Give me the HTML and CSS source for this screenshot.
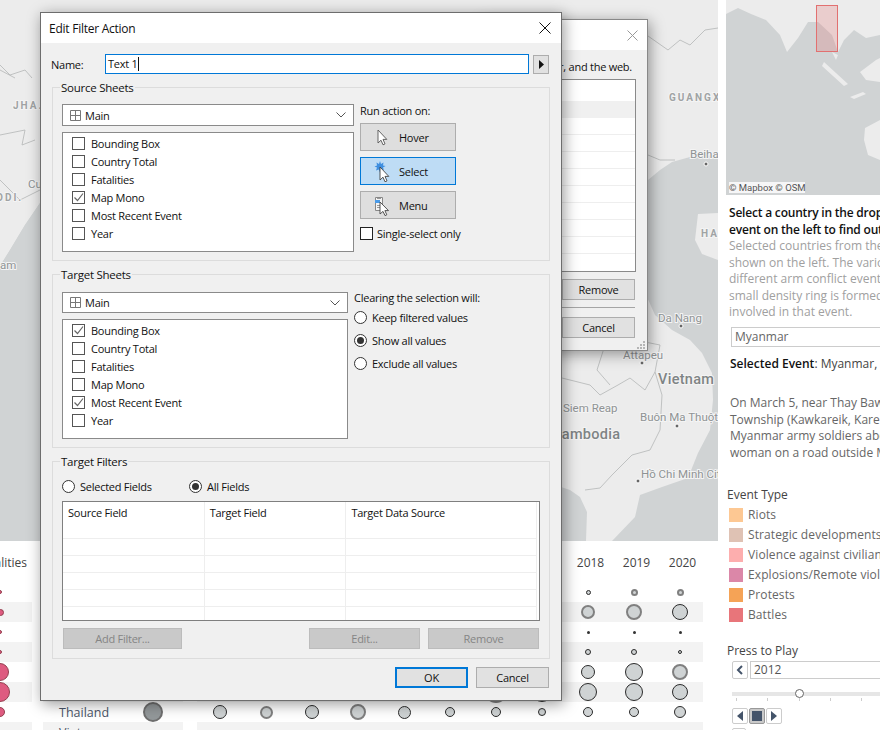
FILE: index.html
```html
<!DOCTYPE html>
<html lang="en">
<head>
<meta charset="utf-8">
<title>Edit Filter Action</title>
<link rel="stylesheet" href="styles.css">
</head>
<body>
<div class="page">
  <div class="dash">
    <svg class="map" viewBox="0 0 718 541" width="718" height="541" aria-hidden="true">
      <rect width="718" height="541" fill="#d0d3d4"/>
      <path fill="#ececec" d="M0 0H718V155L690 157 672 162 660 170 648 180 640 200 640 260 647 297 655 315 672 330 690 340 702 353 712 373 713 400 710 430 698 453 688 478 662 487 640 495 635 517 612 541 586 541 587 512 580 497 570 490 561 487 500 480 100 480 60 200 40 203 25 225 10 250 0 266Z"/>
      <path fill="#ececec" d="M698 214 718 213V260L702 254 695 240Z"/>
      <path fill="#d0d3d4" d="M0 266 10 250 25 225 40 203V541H0Z"/>
      <g fill="none" stroke="#b4b6b6" stroke-width=".8">
        <path d="M648 36 668 50 680 40 690 45 705 30 718 28"/>
        <path d="M648 155 660 160 675 160"/>
        <path d="M562 378 590 385 600 395 618 385 630 378 645 390 655 372 662 395 660 430 650 450 632 455 612 475 600 488 585 490"/>
        <path d="M605 345 597 370 610 385M635 340 660 345 655 372"/>
        <path d="M0 70 15 78M0 135 25 130 22 145 35 140M0 65 10 75 25 70 32 78M0 180 20 200 40 190"/>
      </g>
      <text class="lbl sp" x="13" y="109">JHA.</text>
      <text class="lbl" x="28" y="188">Cu</text>
      <text class="lbl sp" x="-4" y="201">ODI.</text>
      <text class="lbl" x="0" y="269">am</text>
      <text class="lbl sp" x="669" y="101">GUANGX</text>
      <text class="lbl" x="690" y="158">Beiha</text>
      <circle class="dot" cx="706" cy="164" r="2"/>
      <text class="lbl sp" x="701" y="237">HA</text>
      <text class="lbl" x="658" y="322">Da Nang</text>
      <circle class="dot" cx="681" cy="326" r="2"/>
      <text class="lbl" x="623" y="359">Attapeu</text>
      <circle class="dot" cx="642" cy="363" r="2"/>
      <text class="lbl big" x="658" y="384">Vietnam</text>
      <text class="lbl" x="563" y="412">Siem Reap</text>
      <text class="lbl" x="640" y="421">Buôn Ma Thuột</text>
      <circle class="dot" cx="677" cy="426" r="2"/>
      <text class="lbl big" x="552" y="439">Cambodia</text>
      <text class="lbl" x="641" y="478">Hồ Chi Minh City</text>
      <circle class="dot" cx="638" cy="481" r="2"/>
    </svg>
    <div class="bubble-table">
      <div class="row head">
        <div class="c1 title-cell">Fatalities</div>
        <div class="c2"></div>
        <div class="c3 years">
          <span>2010</span><span>2011</span><span>2012</span><span>2013</span><span>2014</span><span>2015</span><span>2016</span><span>2017</span><span>2018</span><span>2019</span><span>2020</span>
        </div>
      </div>
      <div class="row">
        <div class="c1"><span class="cell"><i class="b red" style="width:4px;height:4px"></i></span></div>
        <div class="c2"></div>
        <div class="c3"><span class="cell skip8"><i class="b dk" style="width:5px;height:5px"></i></span><span class="cell"><i class="b gr" style="width:7px;height:7px"></i></span><span class="cell"><i class="b gr" style="width:7px;height:7px"></i></span></div>
      </div>
      <div class="row alt">
        <div class="c1"><span class="cell"><i class="b red" style="width:7px;height:7px"></i></span></div>
        <div class="c2"></div>
        <div class="c3"><span class="cell skip8"><i class="b gr" style="width:14px;height:14px"></i></span><span class="cell"><i class="b gr" style="width:16px;height:16px"></i></span><span class="cell"><i class="b dk" style="width:16px;height:16px"></i></span></div>
      </div>
      <div class="row">
        <div class="c1"><span class="cell"><i class="b red" style="width:4px;height:4px"></i></span></div>
        <div class="c2"></div>
        <div class="c3"><span class="cell skip8"><i class="b pt" style="width:3px;height:3px"></i></span><span class="cell"><i class="b pt" style="width:3px;height:3px"></i></span><span class="cell"><i class="b pt" style="width:3px;height:3px"></i></span></div>
      </div>
      <div class="row alt">
        <div class="c1"><span class="cell"><i class="b red" style="width:4px;height:4px"></i></span></div>
        <div class="c2"></div>
        <div class="c3"><span class="cell skip8"><i class="b dk" style="width:6px;height:6px"></i></span><span class="cell"><i class="b dk" style="width:6px;height:6px"></i></span><span class="cell"><i class="b dk" style="width:4px;height:4px"></i></span></div>
      </div>
      <div class="row">
        <div class="c1"><span class="cell"><i class="b red" style="width:18px;height:18px"></i></span></div>
        <div class="c2"></div>
        <div class="c3"><span class="cell skip8"><i class="b dk" style="width:14px;height:14px"></i></span><span class="cell"><i class="b dk" style="width:18px;height:18px"></i></span><span class="cell"><i class="b gr" style="width:16px;height:16px"></i></span></div>
      </div>
      <div class="row alt">
        <div class="c1"><span class="cell"><i class="b red" style="width:20px;height:20px"></i></span></div>
        <div class="c2"><span class="name"></span><span class="cell big"><i class="b gr" style="width:18px;height:18px"></i></span></div>
        <div class="c3"><span class="cell skip6"><i class="b gr" style="width:22px;height:22px"></i></span><span class="cell"><i class="b dk" style="width:20px;height:20px"></i></span><span class="cell"><i class="b dk" style="width:18px;height:18px"></i></span><span class="cell"><i class="b dk" style="width:18px;height:18px"></i></span><span class="cell"><i class="b dk" style="width:16px;height:16px"></i></span></div>
      </div>
      <div class="row">
        <div class="c1"><span class="cell"><i class="b red" style="width:10px;height:10px"></i></span></div>
        <div class="c2"><span class="name">Thailand</span><span class="cell big"><i class="b gr fill" style="width:20px;height:20px"></i></span></div>
        <div class="c3"><span class="cell"><i class="b dk" style="width:14px;height:14px"></i></span><span class="cell"><i class="b gr" style="width:13px;height:13px"></i></span><span class="cell"><i class="b dk" style="width:14px;height:14px"></i></span><span class="cell"><i class="b gr" style="width:16px;height:16px"></i></span><span class="cell"><i class="b dk" style="width:13px;height:13px"></i></span><span class="cell"><i class="b dk" style="width:10px;height:10px"></i></span><span class="cell"><i class="b dk" style="width:10px;height:10px"></i></span><span class="cell"><i class="b dk" style="width:8px;height:8px"></i></span><span class="cell"><i class="b dk" style="width:10px;height:10px"></i></span><span class="cell"><i class="b dk" style="width:10px;height:10px"></i></span><span class="cell"><i class="b dk" style="width:12px;height:12px"></i></span></div>
      </div>
      <div class="row alt">
        <div class="c1"></div>
        <div class="c2"><span class="name">Vietnam</span><span class="cell big"><i class="b dk" style="width:4px;height:4px"></i></span></div>
        <div class="c3"></div>
      </div>
    </div>
  </div>

  <aside class="side">
    <svg class="mini" viewBox="0 0 154 195" width="154" height="195" aria-hidden="true">
      <rect width="154" height="195" fill="#d0d3d4"/>
      <path fill="#ececec" d="M0 0H154V35L140 38 128 30 118 40 112 52 106 35 92 22 82 22 72 38 61 52 54 35 40 20 25 14 12 8 0 14Z"/>
      <path fill="#ececec" d="M98 62 122 84 118 86 96 66ZM124 97 137 92 140 94 128 99ZM134 72 150 60 154 58V82L140 80ZM139 128 154 120V160L142 155 138 140ZM106 52 110 60 112 55Z"/>
      <rect class="bbox" x="90.500" y="5.500" width="21" height="46"/>
    </svg>
    <div class="attrib">© Mapbox © OSM</div>
    <div class="intro">
      <p class="strong">Select a country in the dropdown and an</p>
      <p class="strong">event on the left to find out more.</p>
      <p class="muted">Selected countries from the dropdown are</p>
      <p class="muted">shown on the left. The various circles show</p>
      <p class="muted">different arm conflict events in that year. A</p>
      <p class="muted">small density ring is formed by the actors</p>
      <p class="muted">involved in that event.</p>
    </div>
    <div class="drop">Myanmar</div>
    <p class="selected"><b>Selected Event</b>: Myanmar, March 5</p>
    <div class="story">
      <p>On March 5, near Thay Baw Boe village in</p>
      <p>Township (Kawkareik, Karen state), two</p>
      <p>Myanmar army soldiers abducted a young</p>
      <p>woman on a road outside Myawaddy.</p>
    </div>
    <p class="sec first">Event Type</p>
    <ul class="legend-list">
      <li><i class="sw riots"></i>Riots</li>
      <li><i class="sw strat"></i>Strategic developments</li>
      <li><i class="sw viol"></i>Violence against civilians</li>
      <li><i class="sw expl"></i>Explosions/Remote violence</li>
      <li><i class="sw prot"></i>Protests</li>
      <li><i class="sw batt"></i>Battles</li>
    </ul>
    <p class="sec play">Press to Play</p>
    <div class="year-row">
      <span class="pbtn"><svg width="8" height="10" viewBox="0 0 8 10"><path d="M6 1 2 5l4 4" fill="none" stroke="#44546a" stroke-width="2"/></svg></span>
      <span class="year-box">2012</span>
    </div>
    <div class="slider"><i class="knob"></i></div>
    <div class="ticks"><i></i><i></i><i></i><i></i><i></i></div>
    <div class="transport">
      <span class="pbtn"><svg width="8" height="10" viewBox="0 0 8 10"><path d="M7 0v10L1 5z" fill="#44546a"/></svg></span>
      <span class="pbtn on"><svg width="10" height="10" viewBox="0 0 10 10"><rect width="10" height="10" fill="#44546a"/></svg></span>
      <span class="pbtn"><svg width="8" height="10" viewBox="0 0 8 10"><path d="M1 0v10l6-5z" fill="#44546a"/></svg></span>
    </div>
    <span class="pbtn extra"></span>
  </aside>

  <section class="win back">
    <div class="win-title faded"><svg width="11" height="11" viewBox="0 0 11 11"><path d="M.5.500l10 10M10.500.500l-10 10" stroke="#999" fill="none"/></svg></div>
    <p class="back-text">Tableau Server, and the web.</p>
    <div class="back-list">
      <div class="br tall"></div><div class="br sel"></div><div class="br"></div><div class="br"></div><div class="br"></div><div class="br"></div><div class="br"></div><div class="br"></div><div class="br"></div><div class="br"></div>
    </div>
    <div class="back-btn first">Remove</div>
    <hr class="back-sep">
    <div class="back-btn">Cancel</div>
    <svg class="grip" width="8" height="8" viewBox="0 0 8 8" aria-hidden="true"><path fill="#b5b5b5" d="M6 0h2v2H6zM3 3h2v2H3zM6 3h2v2H6zM0 6h2v2H0zM3 6h2v2H3zM6 6h2v2H6z"/></svg>
  </section>

  <section class="win main">
    <div class="win-title"><span>Edit Filter Action</span><svg width="12" height="12" viewBox="0 0 12 12"><path d="M.5.500l11 11M11.500.500l-11 11" stroke="#111" fill="none"/></svg></div>
    <div class="name-row">
      <label class="name-label">Name:</label>
      <div class="name-input">Text 1<i class="caret"></i></div>
      <div class="arrow-btn"><svg width="5" height="9" viewBox="0 0 5 9"><path d="M0 0v9l5-4.500z" fill="#111"/></svg></div>
    </div>

    <div class="group g1">
      <div class="legend">Source Sheets</div>
      <div class="cols">
        <div class="left">
          <div class="select"><svg class="grid" width="11" height="11" viewBox="0 0 11 11"><path d="M.5.500h10v10H.5zM5.500.500v10M.5 5.500h10" fill="none" stroke="#777"/></svg>Main<svg class="chev" width="10" height="6" viewBox="0 0 10 6"><path d="M.5.500 5 5 9.500.500" fill="none" stroke="#555"/></svg></div>
          <div class="list">
            <div class="ck"><i class="box"></i>Bounding Box</div>
            <div class="ck"><i class="box"></i>Country Total</div>
            <div class="ck"><i class="box"></i>Fatalities</div>
            <div class="ck"><i class="box"><svg width="11" height="11" viewBox="0 0 11 11"><path d="M1.500 5.500 4.500 8.500 10 1.500" fill="none" stroke="#666" stroke-width="1.200"/></svg></i>Map Mono</div>
            <div class="ck"><i class="box"></i>Most Recent Event</div>
            <div class="ck"><i class="box"></i>Year</div>
          </div>
        </div>
        <div class="right">
          <div class="rlabel">Run action on:</div>
          <div class="act">
            <svg width="24" height="22" viewBox="0 0 24 22"><path d="M4 4v13l3-2.800 2 4.600 2-.9-2-4.500h3.800z" fill="#fff" stroke="#555" stroke-width=".9"/></svg>
            <span>Hover</span>
          </div>
          <div class="act active">
            <svg width="24" height="22" viewBox="0 0 24 22"><path d="M6 1l1 3 2.500-1.500L9 5.500l2.500.5L9 7.500l1 2.500-2.800-1L6 12.500 4.800 9.500 2 10.500 3 7.500.5 6.500 3 5.500 2.500 2.500 5 4z" fill="#3f8fe0"/><path d="M6 7v13l3-2.800 2 4.600 2-.9-2-4.500h3.800z" fill="#fff" stroke="#444" stroke-width=".9"/></svg>
            <span>Select</span>
          </div>
          <div class="act">
            <svg width="24" height="22" viewBox="0 0 24 22"><path d="M1.500 3.500h7v13h-7z" fill="#f4f4f4" stroke="#888"/><path d="M1 6h5v3H1z" fill="#4a9be8"/><path d="M3 11.500h4M3 13.500h4M3 4.500h4" stroke="#999"/><path d="M6 8v12l3-2.600 2 4.200 1.800-.8-1.900-4.200h3.600z" fill="#fff" stroke="#444" stroke-width=".9"/></svg>
            <span>Menu</span>
          </div>
          <div class="single"><i class="box dark"></i>Single-select only</div>
        </div>
      </div>
    </div>

    <div class="group g2">
      <div class="legend">Target Sheets</div>
      <div class="cols narrow">
        <div class="left">
          <div class="select short"><svg class="grid" width="11" height="11" viewBox="0 0 11 11"><path d="M.5.500h10v10H.5zM5.500.500v10M.5 5.500h10" fill="none" stroke="#777"/></svg>Main<svg class="chev" width="10" height="6" viewBox="0 0 10 6"><path d="M.5.500 5 5 9.500.500" fill="none" stroke="#555"/></svg></div>
          <div class="list tgt">
            <div class="ck"><i class="box"><svg width="11" height="11" viewBox="0 0 11 11"><path d="M1.500 5.500 4.500 8.500 10 1.500" fill="none" stroke="#666" stroke-width="1.200"/></svg></i>Bounding Box</div>
            <div class="ck"><i class="box"></i>Country Total</div>
            <div class="ck"><i class="box"></i>Fatalities</div>
            <div class="ck"><i class="box"></i>Map Mono</div>
            <div class="ck"><i class="box"><svg width="11" height="11" viewBox="0 0 11 11"><path d="M1.500 5.500 4.500 8.500 10 1.500" fill="none" stroke="#666" stroke-width="1.200"/></svg></i>Most Recent Event</div>
            <div class="ck"><i class="box"></i>Year</div>
          </div>
        </div>
        <div class="right">
          <div class="rlabel clear">Clearing the selection will:</div>
          <div class="radio"><i class="rd"></i>Keep filtered values</div>
          <div class="radio"><i class="rd on"></i>Show all values</div>
          <div class="radio"><i class="rd"></i>Exclude all values</div>
        </div>
      </div>
    </div>

    <div class="group g3">
      <div class="legend">Target Filters</div>
      <div class="radios">
        <div class="radio inline"><i class="rd"></i>Selected Fields</div>
        <div class="radio inline"><i class="rd on"></i>All Fields</div>
      </div>
      <div class="table">
        <div class="tr th"><span>Source Field</span><span>Target Field</span><span>Target Data Source</span></div>
        <div class="tr"><span></span><span></span><span></span></div>
        <div class="tr"><span></span><span></span><span></span></div>
        <div class="tr"><span></span><span></span><span></span></div>
        <div class="tr"><span></span><span></span><span></span></div>
        <div class="tr"><span></span><span></span><span></span></div>
      </div>
      <div class="tbtns">
        <div class="dis add">Add Filter...</div>
        <div class="dis edit">Edit...</div>
        <div class="dis rem">Remove</div>
      </div>
    </div>

    <div class="foot">
      <div class="fbtn ok">OK</div>
      <div class="fbtn">Cancel</div>
    </div>
  </section>
</div>
</body>
</html>
```

FILE: styles.css
```css
* { box-sizing: border-box; }
html, body { margin: 0; padding: 0; background: #fff; }
p { margin: 0; }
.page { position: relative; width: 880px; height: 730px; overflow: hidden; display: flex; font-family: "Open Sans", sans-serif; color: #444; }

/* dashboard behind the dialogs */
.dash { width: 718px; flex: none; }
.map { display: block; }
.lbl { font: 11.500px "Roboto", sans-serif; fill: #8f9394; paint-order: stroke; stroke: #f4f4f4; stroke-width: 2px; }
.lbl.sp { font-size: 10px; font-weight: 700; letter-spacing: 2px; fill: #a0a3a4; }
.lbl.big { font-size: 14.500px; font-weight: 500; fill: #7f8485; letter-spacing: .3px; }
.dot { fill: #666; stroke: #fff; stroke-width: 1; }
.bubble-table { width: 718px; }
.row { display: flex; height: 20px; align-items: stretch; }
.row.head { height: 41px; padding-top: 14px; font-size: 12px; line-height: 16px; color: #444; }
.c1 { width: 32px; overflow: hidden; display: flex; flex: none; }
.c2 { width: 140px; margin-left: 11px; display: flex; flex: none; align-items: center; }
.c3 { width: 506px; margin-left: 14px; display: flex; flex: none; }
.title-cell { justify-content: flex-end; width: 27px; margin-right: 5px; white-space: nowrap; }
.years span { width: 46px; padding-left: 5px; text-align: center; }
.row.alt .c1, .row.alt .c2, .row.alt .c3 { background: #f3f3f3; }
.cell { width: 46px; flex: none; display: flex; align-items: center; justify-content: center; }
.c1 .cell { margin-left: -23px; }
.skip8 { margin-left: 368px; }
.skip6 { margin-left: 276px; }
.cell.big { width: 40px; margin-right: 10px; }
.name { flex: 1; padding-left: 16px; font-size: 12.500px; color: #4a5568; white-space: nowrap; }
.b { display: block; flex: none; border-radius: 50%; background: #cfd3d4; border: 1px solid #2b2b2b; }
.b.gr { border: 2px solid #808080; }
.b.dk { border: 1px solid #2b2b2b; }
.b.pt { background: #333; border: 0; }
.b.fill { background: #93989a; border-color: #6f6f6f; }
.b.red { background: #de5b80; border: 1px solid #93404f; }

/* right rail */
.side { width: 154px; margin-left: 8px; flex: none; font-size: 12px; line-height: 16.500px; overflow: hidden; position: relative; white-space: nowrap; }
.mini { display: block; }
.bbox { fill: rgba(226, 110, 110, .25); stroke: #e27070; }
.attrib { position: absolute; left: 3px; top: 182px; height: 11px; width: 76px; background: rgba(255,255,255,.8); font: 9.500px/11px "Roboto", sans-serif; color: #555; }
.intro { margin-top: 10px; padding-left: 3px; }
.strong { color: #111; font-weight: 600; letter-spacing: -.2px; }
.muted { color: #a0a0a0; }
.drop { margin: 6px 0 0 5px; height: 20px; line-height: 17px; border: 1px solid #ccc; border-right: 0; padding-left: 3px; color: #666; }
.selected { margin-top: 9px; padding-left: 4px; color: #444; }
.selected b { font-weight: 600; color: #111; }
.story { margin-top: 23px; padding-left: 4px; color: #666; }
.sec { padding-left: 1px; color: #444; line-height: 16px; }
.sec.first { margin-top: 26px; }
.sec.play { margin-top: 18px; }
.legend-list { list-style: none; margin: 2px 0 0; padding: 0; letter-spacing: .1px; }
.legend-list li { height: 20px; display: flex; align-items: center; padding-left: 3px; color: #666; }
.sw { width: 14px; height: 14px; margin-right: 5px; flex: none; }
.riots { background: #fdc893; }
.strat { background: #dfc2b4; }
.viol { background: #fdaeae; }
.expl { background: #db87a8; }
.prot { background: #f5a356; }
.batt { background: #e8757a; }
.year-row { margin: 2px 0 0 6px; display: flex; gap: 2px; }
.pbtn { width: 16px; height: 16px; border: 1px solid #ccc; border-radius: 2px; display: flex; align-items: center; justify-content: center; background: #fff; flex: none; }
.year-row .pbtn { height: 18px; }
.year-box { flex: 1; height: 18px; border: 1px solid #ccc; border-right: 0; line-height: 16px; padding-left: 3px; color: #555; }
.slider { position: relative; margin: 13px 0 0 6px; height: 4px; background: #e6e6e6; }
.knob { position: absolute; left: 63px; top: -3px; width: 9px; height: 9px; border-radius: 50%; background: #fff; border: 1px solid #666; }
.ticks { margin: 2px 0 0 10px; display: flex; gap: 30.300px; height: 3px; }
.ticks i { width: 1px; height: 3px; background: #ccc; }
.transport { margin: 7px 0 0 6px; display: flex; gap: 1px; }
.pbtn.on { background: #c9c9c9; border-color: #999; }
.pbtn.extra { margin: 4px 0 0 6px; width: 14px; }

/* windows */
.win { position: absolute; background: #f0f0f0; border: 1px solid #6d6d6d; box-shadow: 2px 3px 14px rgba(0,0,0,.4); font-family: "Open Sans", sans-serif; font-size: 11px; letter-spacing: -.25px; color: #111; }
.win-title { height: 30px; background: #fff; display: flex; align-items: center; justify-content: space-between; padding: 0 10px 0 8px; }
.win-title span { font-size: 12px; }
.main { left: 40px; top: 12px; width: 522px; height: 689px; }
.back { left: 480px; top: 19px; width: 168px; height: 332px; border-color: #888; }
.faded { justify-content: flex-end; padding-right: 9px; }
.back-text { margin-top: 9px; height: 19px; padding-right: 15px; text-align: right; white-space: nowrap; line-height: 16px; }
.back-list { margin: 1px 11px 0 0; height: 193px; background: #fff; border: 1px solid #8a8a8a; }
.br { height: 17px; border-bottom: 1px solid #eee; }
.br.tall { height: 21px; border: 0; }
.br.sel { background: #f0f0f0; border: 0; }
.back-btn { margin: 0 12px 0 81px; height: 21px; line-height: 19px; text-align: center; background: #e1e1e1; border: 1px solid #adadad; }
.back-btn.first { margin-top: 7px; }
.back-sep { margin: 7px 12px 9px 81px; border: 0; border-top: 1px solid #a5a5a5; }
.grip { position: absolute; right: 2px; bottom: 1px; }

.name-row { display: flex; align-items: center; margin-top: 11px; height: 20px; padding-left: 10px; }
.name-label { width: 54px; }
.name-input { width: 424px; height: 20px; background: #fff; border: 1px solid #0078d7; padding-left: 2px; line-height: 18px; }
.caret { display: inline-block; width: 1px; height: 14px; background: #111; vertical-align: -3px; }
.arrow-btn { margin-left: 4px; width: 16px; height: 19px; background: #e1e1e1; border: 1px solid #adadad; display: flex; align-items: center; justify-content: center; }

.group { margin: 13px 0 0 11px; width: 498px; border: 1px solid #dcdcdc; padding: 0 9px; }
.g1 { height: 174px; }
.g2 { height: 174px; }
.g3 { height: 198px; }
.legend { display: table; margin: -8px 0 0 -2px; padding: 0 1px; background: #f0f0f0; height: 16px; line-height: 16px; font-size: 11.500px; }
.cols { display: flex; gap: 6px; margin-top: 8px; }
.left { width: 292px; }
.narrow .left { width: 286px; }
.narrow { margin-top: 9px; }
.select { height: 22px; background: #fff; border: 1px solid #8a8a8a; display: flex; align-items: center; padding: 0 7px; }
.select.short { height: 21px; }
.grid { margin-right: 4px; }
.chev { margin-left: auto; }
.list { margin-top: 6px; height: 120px; background: #fff; border: 1px solid #8a8a8a; padding: 1px 0 0 9px; }
.list.tgt { margin-top: 6px; padding-top: 1px; }
.ck { height: 18px; display: flex; align-items: center; }
.box { width: 13px; height: 13px; border: 1px solid #555; background: #fff; margin-right: 6px; flex: none; display: flex; align-items: center; justify-content: center; }
.box.dark { border-color: #222; margin-right: 4px; }
.right { flex: 1; }
.rlabel { height: 19px; line-height: 13px; }
.act { width: 96px; height: 28px; margin-bottom: 6px; background: #dedede; border: 1px solid #adadad; display: flex; align-items: center; padding-left: 13px; }
.act svg { flex: none; margin-right: 1px; }
.act.active { background: #bedcf5; border-color: #0078d7; }
.single { margin-top: 7px; display: flex; align-items: center; height: 14px; }
.clear { height: 15px; line-height: 11px; margin-bottom: 2px; }
.radio { display: flex; align-items: center; height: 13px; margin: 4px 0 10px; }
.rd { width: 13px; height: 13px; border: 1px solid #333; border-radius: 50%; background: #fff; margin-right: 5px; flex: none; display: flex; align-items: center; justify-content: center; }
.rd.on::after { content: ""; width: 7px; height: 7px; border-radius: 50%; background: #333; }
.radios { display: flex; margin-top: 10px; height: 19px; }
.radio.inline { margin: 0; width: 127px; }
.table { margin-top: 2px; width: 478px; height: 120px; background: #fff; border: 1px solid #7f7f7f; padding-right: 2px; overflow: hidden; }
.tr { display: flex; height: 17px; border-bottom: 1px solid #eee; }
.tr.th { height: 37px; }
.tr span { width: 142px; height: 100%; border-right: 1px solid #eee; padding: 3px 0 0 5px; }
.tr span:last-child { width: 191px; }
.tbtns { display: flex; margin: 7px 0 0 1px; }
.dis { height: 21px; line-height: 19px; background: #c9c9c9; border: 1px solid #bcbcbc; color: #858585; text-align: center; }
.add { width: 119px; }
.edit { width: 111px; margin-left: 127px; }
.rem { width: 111px; margin-left: 8px; }
.foot { display: flex; justify-content: flex-end; gap: 8px; margin: 8px 12px 0 0; }
.fbtn { width: 73px; height: 21px; line-height: 19px; text-align: center; background: #e1e1e1; border: 1px solid #adadad; }
.fbtn.ok { border: 2px solid #0078d7; line-height: 17px; }
```
